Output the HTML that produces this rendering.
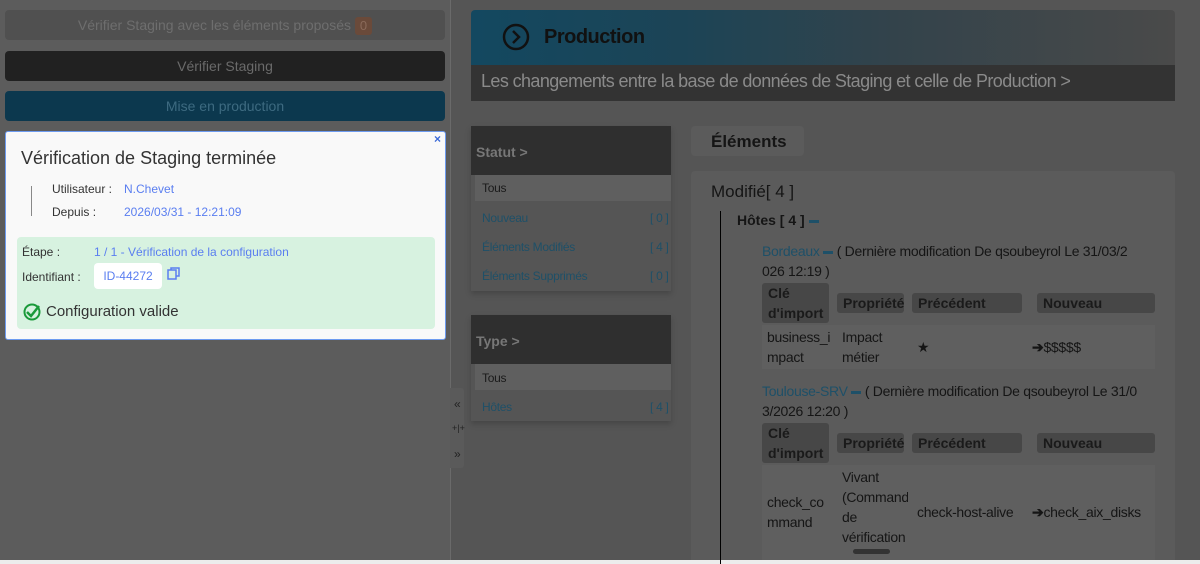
<!DOCTYPE html>
<html><head><meta charset="utf-8"><style>
*{box-sizing:border-box;margin:0;padding:0}
body{width:1200px;height:564px;overflow:hidden;background:#555;font-family:"Liberation Sans",sans-serif;position:relative;color:#111}
.a{position:absolute}
.btn{position:absolute;left:5px;width:440px;height:30px;border-radius:4px;text-align:center;font-size:14px;line-height:30px}
.lato{font-family:"Liberation Sans","DejaVu Sans",sans-serif}
.th{position:absolute;background:#474747;border-radius:3px;font-weight:bold;font-size:14px;color:#1a1a1a;padding:0 6px}
.td{position:absolute;font-size:14px;color:#151515;line-height:20px;letter-spacing:-0.3px}
.td.blue,.blue{color:#1e5068}
</style></head><body>
<div class="a" style="left:0;top:0;width:450px;height:564px;background:#5c5c5c"></div>
<div class="a" style="left:450px;top:0;width:1px;height:564px;background:#6a6a6a"></div>
<div class="btn" style="top:10px;background:#505050;color:#6e6e6e">Vérifier Staging avec les éléments proposés <span style="display:inline-block;background:#6a4a3a;color:#8a6a5a;border-radius:3px;padding:0 5px;line-height:18px;font-size:13px">0</span></div>
<div class="btn" style="top:51px;background:#212121;color:#6a6a6a">Vérifier Staging</div>
<div class="btn" style="top:91px;background:#0c384e;color:#3d6a80">Mise en production</div>

<div class="a" style="left:5px;top:131px;width:441px;height:209px;background:#f9f9f9;border:1px solid #6d9bf0;border-radius:3px">
 <div class="a" style="right:4px;top:0px;color:#3a6ad8;font-size:12px;font-weight:bold">×</div>
 <div class="a" style="left:15px;top:16px;font-size:18px;color:#333">Vérification de Staging terminée</div>
 <div class="a" style="left:25px;top:54px;width:1px;height:30px;background:#888"></div>
 <div class="a" style="left:46px;top:50px;font-size:12px;color:#333">Utilisateur :</div>
 <div class="a" style="left:118px;top:50px;font-size:12px;color:#5a7ef0">N.Chevet</div>
 <div class="a" style="left:46px;top:73px;font-size:12px;color:#333">Depuis :</div>
 <div class="a" style="left:118px;top:73px;font-size:12px;color:#5a7ef0">2026/03/31 - 12:21:09</div>
 <div class="a" style="left:11px;top:105px;width:418px;height:92px;background:#d7f2e0;border-radius:4px">
  <div class="a" style="left:5px;top:8px;font-size:12px;color:#333">Étape :</div>
  <div class="a" style="left:77px;top:8px;font-size:12px;color:#5a7ef0">1 / 1 - Vérification de la configuration</div>
  <div class="a" style="left:5px;top:33px;font-size:12px;color:#333">Identifiant :</div>
  <div class="a" style="left:77px;top:26px;width:68px;height:26px;background:#fff;border-radius:4px;font-size:12px;color:#5a7ef0;line-height:26px;text-align:center">ID-44272</div>
  <svg class="a" style="left:150px;top:30px" width="13" height="13"><rect x="1" y="3" width="8" height="9" fill="none" stroke="#5a7ef0" stroke-width="1.5"/><path d="M4 3V1h8v8h-3" fill="none" stroke="#5a7ef0" stroke-width="1.5"/></svg>
  <svg class="a" style="left:6px;top:66px" width="18" height="18"><circle cx="9" cy="9" r="7.5" fill="none" stroke="#1a9a3a" stroke-width="2"/><path d="M4 9l4 4 8-10" fill="none" stroke="#1a9a3a" stroke-width="2.5"/></svg>
  <div class="a" style="left:29px;top:66px;font-size:15px;color:#333">Configuration valide</div>
 </div>
</div>
<div class="a" style="left:0;top:560px;width:1200px;height:4px;background:#ececec"></div>

<div class="a" style="left:471px;top:10px;width:704px;height:55px;border-radius:4px 4px 0 0;background:linear-gradient(90deg,#134860 0%,#1c4456 30%,#33434b 60%,#4a4a4a 100%)"></div>
<svg class="a" style="left:502px;top:23px" width="28" height="28"><circle cx="14" cy="14" r="12" fill="none" stroke="#111" stroke-width="2.5"/><path d="M11 8l6 6-6 6" fill="none" stroke="#111" stroke-width="2.5"/></svg>
<div class="a lato" style="left:544px;top:26px;font-size:20px;color:#111;font-weight:bold;letter-spacing:-0.5px">Production</div>
<div class="a" style="left:471px;top:65px;width:704px;height:36px;background:#333"></div>
<div class="a lato" style="left:481px;top:71px;font-size:18px;color:#8a8a8a;letter-spacing:-0.6px">Les changements entre la base de données de Staging et celle de Production &gt;</div>

<div class="a" style="left:471px;top:126px;width:200px;height:165px;background:#555;box-shadow:0 3px 6px rgba(0,0,0,.2)"></div>
<div class="a" style="left:471px;top:126px;width:200px;height:49px;background:#2f2f2f"></div>
<div class="a" style="left:476px;top:144px;font-size:14px;font-weight:bold;color:#777">Statut &gt;</div>
<div class="a" style="left:475px;top:175px;width:196px;height:26px;background:#5f5f5f"></div>
<div class="td" style="left:482px;top:178px;font-size:12px;color:#1a1a1a">Tous</div>
<div class="td blue" style="left:482px;top:208px;font-size:12px">Nouveau</div><div class="td blue" style="left:650px;top:208px;font-size:12px">[ 0 ]</div>
<div class="td blue" style="left:482px;top:237px;font-size:12px">Éléments Modifiés</div><div class="td blue" style="left:650px;top:237px;font-size:12px">[ 4 ]</div>
<div class="td blue" style="left:482px;top:266px;font-size:12px">Éléments Supprimés</div><div class="td blue" style="left:650px;top:266px;font-size:12px">[ 0 ]</div>

<div class="a" style="left:471px;top:315px;width:200px;height:106px;background:#555;box-shadow:0 3px 6px rgba(0,0,0,.2)"></div>
<div class="a" style="left:471px;top:315px;width:200px;height:49px;background:#2f2f2f"></div>
<div class="a" style="left:476px;top:333px;font-size:14px;font-weight:bold;color:#777">Type &gt;</div>
<div class="a" style="left:475px;top:364px;width:196px;height:26px;background:#5f5f5f"></div>
<div class="td" style="left:482px;top:368px;font-size:12px;color:#1a1a1a">Tous</div>
<div class="td blue" style="left:482px;top:397px;font-size:12px">Hôtes</div><div class="td blue" style="left:650px;top:397px;font-size:12px">[ 4 ]</div>
<div class="a" style="left:450px;top:388px;width:14px;height:80px;background:#5a5a5a;border-radius:0 3px 3px 0"></div>
<div class="a" style="left:454px;top:397px;font-size:12px;color:#222">«</div>
<div class="a" style="left:452px;top:423px;font-size:9px;color:#222">+|+</div>
<div class="a" style="left:454px;top:447px;font-size:12px;color:#222">»</div>

<div class="a" style="left:691px;top:126px;width:113px;height:30px;background:#5b5b5b;border-radius:4px"></div>
<div class="a lato" style="left:711px;top:132px;font-size:17px;font-weight:bold;color:#151515">Éléments</div>
<div class="a" style="left:691px;top:171px;width:484px;height:389px;background:#5b5b5b;border-radius:4px 4px 0 0"></div>
<div class="a lato" style="left:711px;top:182px;font-size:17px;color:#151515">Modifié[ 4 ]</div>
<div class="a" style="left:720px;top:211px;width:1px;height:353px;background:#000"></div>
<div class="a" style="left:737px;top:212px;font-size:14px;font-weight:bold;color:#151515">Hôtes [ 4 ] <span style="display:inline-block;width:10px;height:3px;background:#1e5068;vertical-align:middle"></span></div>
<div class="td" style="left:762px;top:241px;width:395px"><span class="blue">Bordeaux</span> <span style="display:inline-block;width:10px;height:3px;background:#1e5068;vertical-align:middle"></span> ( Dernière modification De qsoubeyrol Le 31/03/2<br>026 12:19 )</div>
<div class="th" style="left:762px;top:283px;width:67px;height:40px;line-height:20px">Clé d'import</div>
<div class="th" style="left:837px;top:293px;width:67px;height:20px;line-height:20px">Propriété</div>
<div class="th" style="left:912px;top:293px;width:110px;height:20px;line-height:20px">Précédent</div>
<div class="th" style="left:1037px;top:293px;width:118px;height:20px;line-height:20px">Nouveau</div>
<div class="a" style="left:762px;top:325px;width:393px;height:44px;background:#5f5f5f"></div>
<div class="td" style="left:767px;top:327px">business_i<br>mpact</div>
<div class="td" style="left:842px;top:327px">Impact<br>métier</div>
<div class="td" style="left:917px;top:337px">★</div>
<div class="td" style="left:1032px;top:337px"><b>➔</b>$$$$$</div>
<div class="td" style="left:762px;top:381px;width:395px"><span class="blue">Toulouse-SRV</span> <span style="display:inline-block;width:10px;height:3px;background:#1e5068;vertical-align:middle"></span> ( Dernière modification De qsoubeyrol Le 31/0<br>3/2026 12:20 )</div>
<div class="th" style="left:762px;top:423px;width:67px;height:40px;line-height:20px">Clé d'import</div>
<div class="th" style="left:837px;top:433px;width:67px;height:20px;line-height:20px">Propriété</div>
<div class="th" style="left:912px;top:433px;width:110px;height:20px;line-height:20px">Précédent</div>
<div class="th" style="left:1037px;top:433px;width:118px;height:20px;line-height:20px">Nouveau</div>
<div class="a" style="left:762px;top:465px;width:393px;height:95px;background:#5f5f5f"></div>
<div class="td" style="left:767px;top:492px">check_co<br>mmand</div>
<div class="td" style="left:842px;top:467px;width:66px;overflow:hidden;white-space:nowrap">Vivant<br>(Command<br>de<br>vérification</div>
<div class="td" style="left:917px;top:502px">check-host-alive</div>
<div class="td" style="left:1032px;top:502px"><b>➔</b>check_aix_disks</div>
<div class="a" style="left:853px;top:549px;width:37px;height:5px;background:#333;border-radius:3px"></div>
</body></html>
